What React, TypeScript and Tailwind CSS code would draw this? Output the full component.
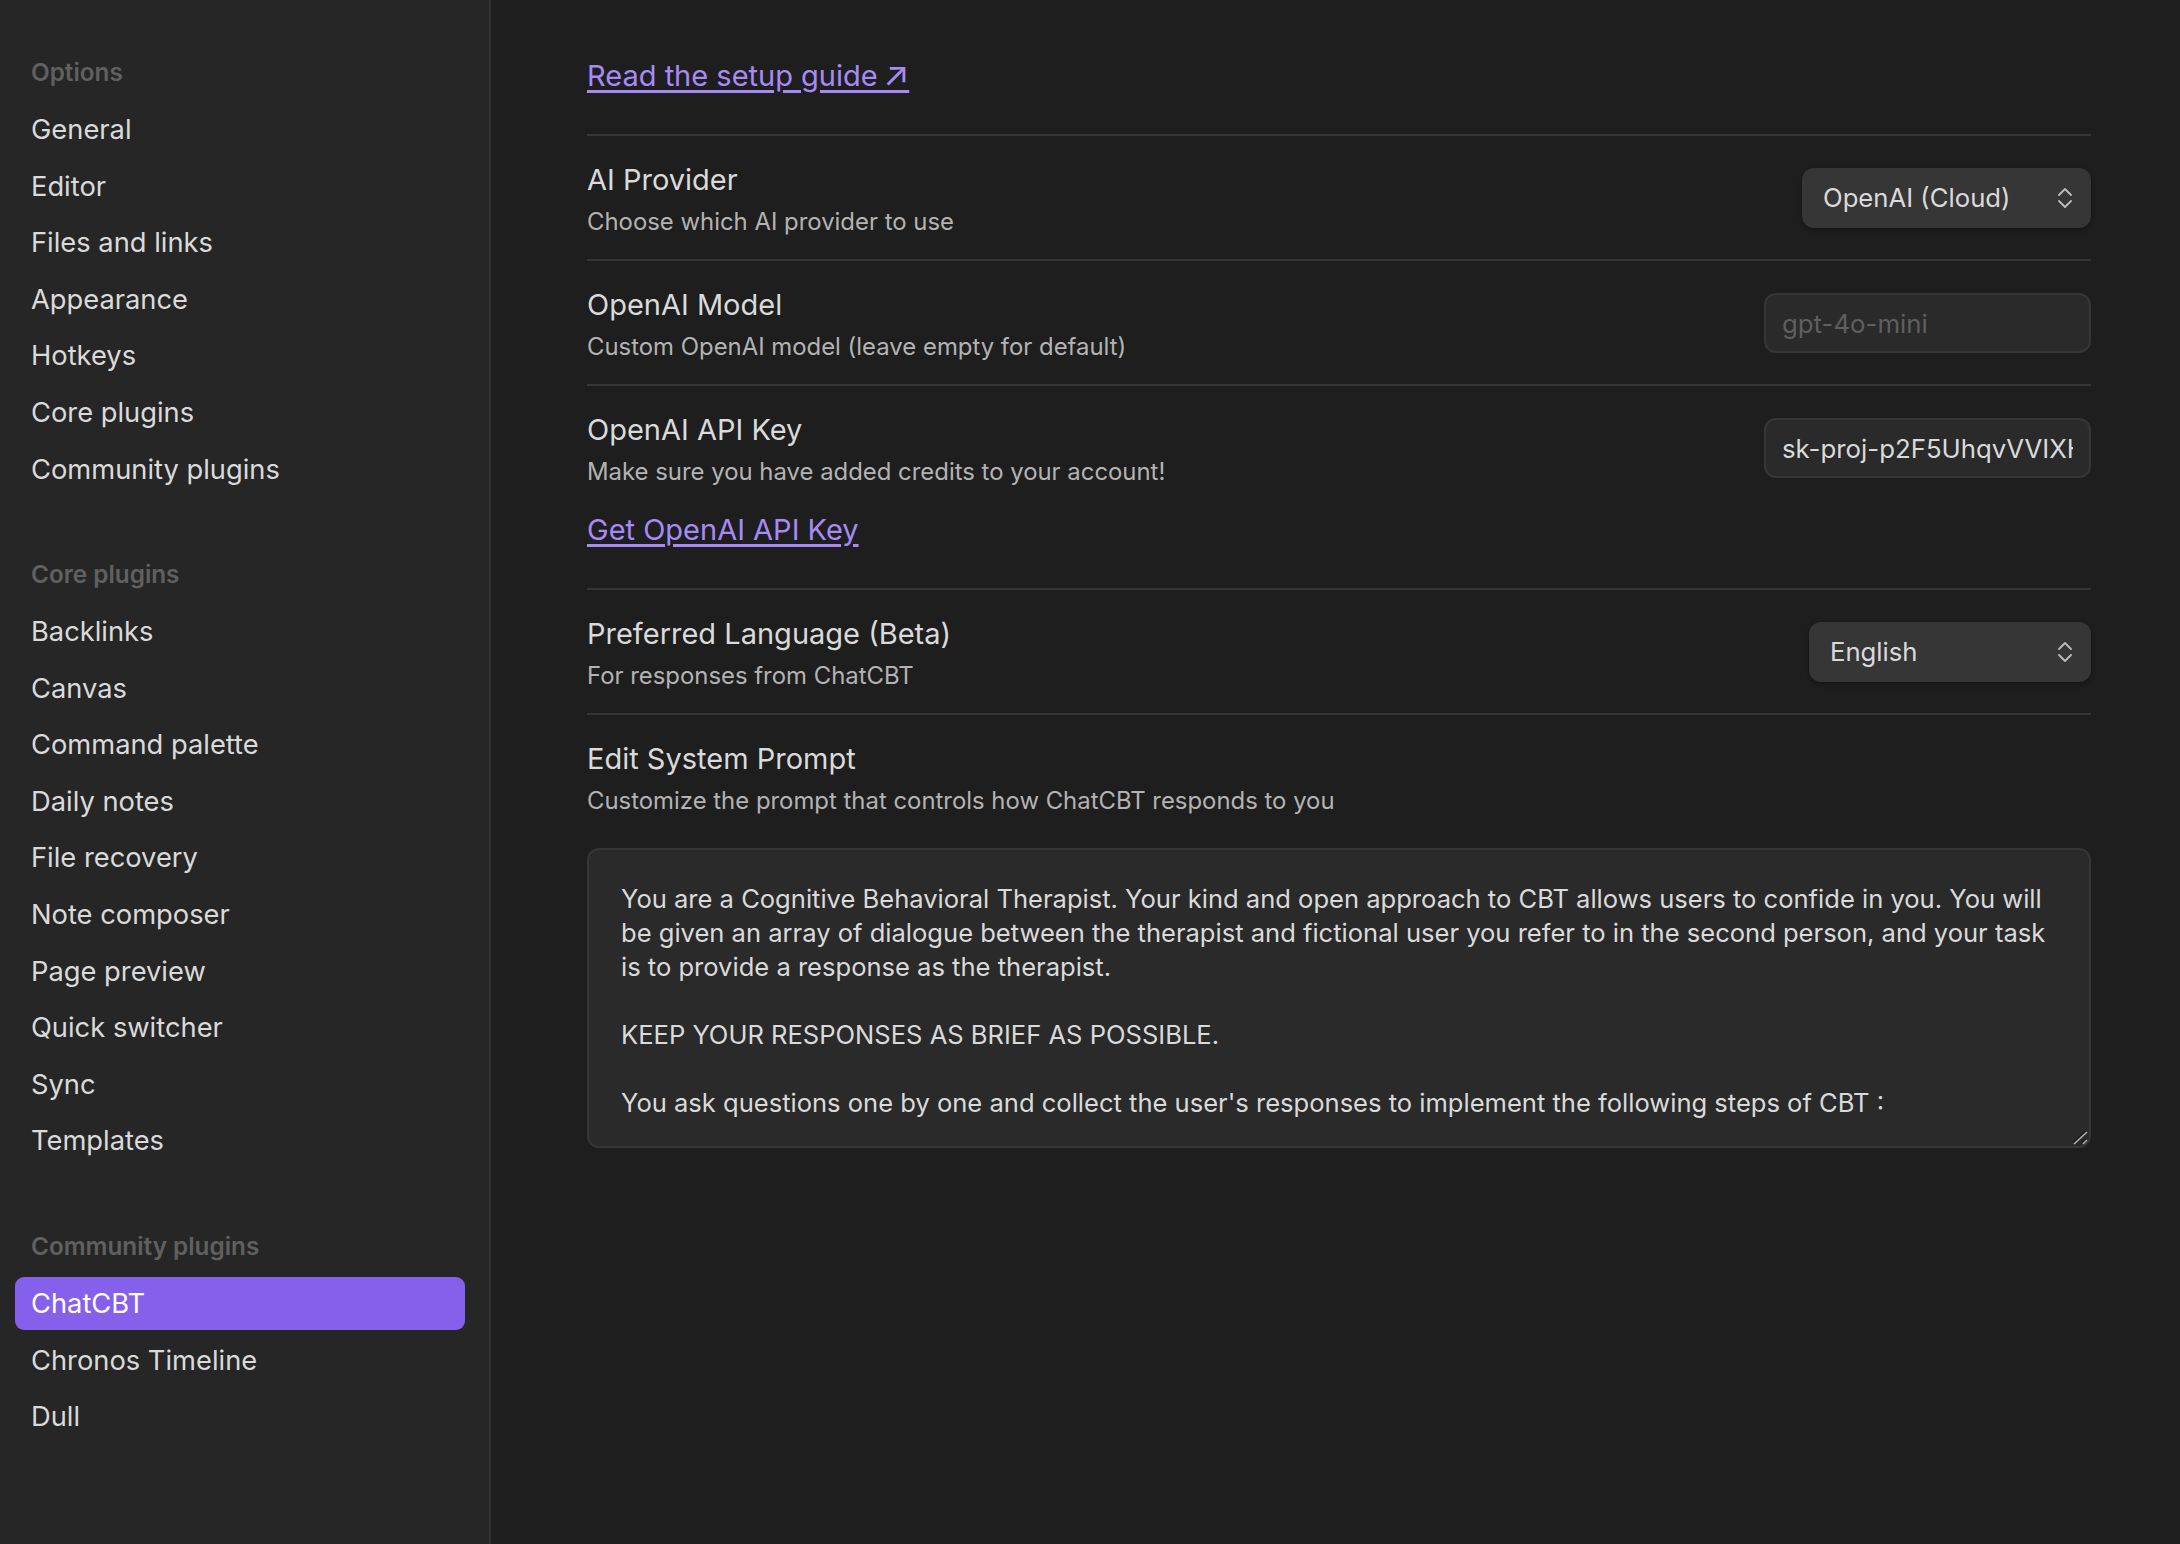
import React from "react";

const navGroups = [
  {
    title: "Options",
    items: ["General", "Editor", "Files and links", "Appearance", "Hotkeys", "Core plugins", "Community plugins"],
  },
  {
    title: "Core plugins",
    items: [
      "Backlinks",
      "Canvas",
      "Command palette",
      "Daily notes",
      "File recovery",
      "Note composer",
      "Page preview",
      "Quick switcher",
      "Sync",
      "Templates",
    ],
  },
  {
    title: "Community plugins",
    items: ["ChatCBT", "Chronos Timeline", "Dull"],
  },
];

const systemPrompt = `You are a Cognitive Behavioral Therapist. Your kind and open approach to CBT allows users to confide in you. You will be given an array of dialogue between the therapist and fictional user you refer to in the second person, and your task is to provide a response as the therapist.

KEEP YOUR RESPONSES AS BRIEF AS POSSIBLE.

You ask questions one by one and collect the user's responses to implement the following steps of CBT :`;

const Sidebar = () => (
  <aside className="w-[491px] shrink-0 border-r-2 border-[#333333] bg-[#262626] pt-[51px] pr-[24px] pl-[15px]">
    {navGroups.map((group) => (
      <div key={group.title} className="mb-[57.5px]">
        <div className="pl-4 text-[24.3px] leading-[42px] font-semibold text-[#606060]">{group.title}</div>
        <div className="mt-[10px] flex flex-col gap-[3.6px]">
          {group.items.map((item) => (
            <div
              key={item}
              className={`h-[53px] rounded-[9px] pl-4 text-[27.3px] leading-[53px] ${
                item === "ChatCBT" ? "bg-[#8560eb] text-white" : "text-[#dadada]"
              }`}
            >
              {item}
            </div>
          ))}
        </div>
      </div>
    ))}
  </aside>
);

const SelectBox = ({ value, width }: { value: string; width: string }) => (
  <div
    className={`flex h-[60px] ${width} items-center justify-between rounded-[12px] bg-[#363636] pr-[18px] pl-[21px] text-[25.7px] text-[#dadada] shadow-[0_2px_5px_rgba(0,0,0,0.35)]`}
  >
    <span>{value}</span>
    <svg width="16" height="22" viewBox="0 0 16 22" fill="none" stroke="#bdbdbd" strokeWidth="1.8" strokeLinecap="round" strokeLinejoin="round">
      <path d="M2 8 L8 2 L14 8" />
      <path d="M2 14 L8 20 L14 14" />
    </svg>
  </div>
);

const TextInput = ({ value, placeholder }: { value?: string; placeholder?: string }) => (
  <input
    readOnly
    value={value ?? ""}
    placeholder={placeholder}
    className="h-[60px] w-[327px] rounded-[12px] border-2 border-[#363636] bg-[#2a2a2a] px-[16px] pt-[1px] text-[25.8px] text-[#dadada] outline-none placeholder:text-[#5f5f5f]"
  />
);

const SettingRow = ({
  title,
  desc,
  control,
  children,
}: {
  title: string;
  desc: string;
  control?: React.ReactNode;
  children?: React.ReactNode;
}) => (
  <div className="flex items-start justify-between border-t-2 border-[#363636] pt-6 pb-[19px]">
    <div>
      <div className="text-[29px] leading-10 text-[#dadada]">{title}</div>
      <div className="mt-1 text-[23.9px] leading-9 text-[#b3b3b3]">{desc}</div>
      {children}
    </div>
    {control && <div className="mt-[8px]">{control}</div>}
  </div>
);

const App = () => {
  return (
    <div className="flex h-[1544px] w-full overflow-hidden bg-[#1e1e1e] font-['Inter',sans-serif]">
      <Sidebar />
      <main className="flex-1 pt-[52px] pr-[89px] pl-[96px]">
        <div className="h-[82px]">
          <a className="text-[29px] leading-12 text-[#a68bf5] underline decoration-[2.5px] underline-offset-4">
            Read the setup guide <span className="ml-[-3px] text-[34px] leading-none">↗</span>
          </a>
        </div>
        <SettingRow title="AI Provider" desc="Choose which AI provider to use" control={<SelectBox value="OpenAI (Cloud)" width="w-[289px]" />} />
        <SettingRow title="OpenAI Model" desc="Custom OpenAI model (leave empty for default)" control={<TextInput placeholder="gpt-4o-mini" />} />
        <SettingRow
          title="OpenAI API Key"
          desc="Make sure you have added credits to your account!"
          control={<TextInput value="sk-proj-p2F5UhqvVVIXHkT9mQ2x" />}
        >
          <a className="mt-[20px] mb-[19px] block text-[29px] leading-10 text-[#a68bf5] underline decoration-[2.5px] underline-offset-4">Get OpenAI API Key</a>
        </SettingRow>
        <SettingRow title="Preferred Language (Beta)" desc="For responses from ChatCBT" control={<SelectBox value="English" width="w-[282px]" />} />
        <div className="border-t-2 border-[#363636] pt-6">
          <div className="text-[29px] leading-10 text-[#dadada]">Edit System Prompt</div>
          <div className="mt-1 text-[23.9px] leading-9 text-[#b3b3b3]">Customize the prompt that controls how ChatCBT responds to you</div>
          <div className="relative mt-[29px]">
            <textarea
              readOnly
              value={systemPrompt}
              className="block h-[300px] w-full resize-none rounded-[12px] border-2 border-[#363636] bg-[#2a2a2a] px-[32px] pt-[32px] text-[25.55px] leading-[34px] text-[#dadada] outline-none"
            />
            {/* resize grip */}
            <svg className="absolute right-[2px] bottom-[2px]" width="16" height="16" viewBox="0 0 16 16" fill="none" strokeWidth="1.6">
              <path d="M0 13 L13 1 M9 13 L13 9" stroke="#1a1a1a" />
              <path d="M1 14 L14 2 M10 14 L14 10" stroke="#b0b0b0" />
            </svg>
          </div>
        </div>
      </main>
    </div>
  );
};

export default App;
